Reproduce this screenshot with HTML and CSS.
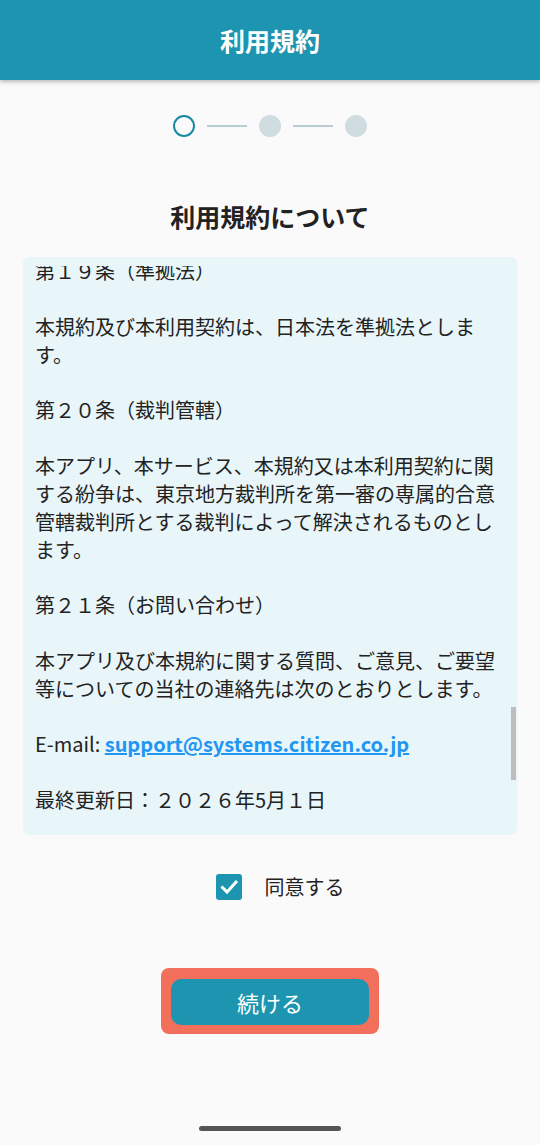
FILE: index.html
```html
<!DOCTYPE html>
<html lang="ja">
<head>
  <meta charset="UTF-8" />
  <meta name="viewport" content="width=device-width, initial-scale=1.0"/>
  <title>利用規約</title>
  <link rel="stylesheet" href="styles.css">
</head>
<body>

<header class="app-bar">
  <h1>利用規約</h1>
</header>

<div class="stepper">
  <span class="step current"></span>
  <span class="step-line"></span>
  <span class="step"></span>
  <span class="step-line"></span>
  <span class="step"></span>
</div>

<h2 class="page-title">利用規約について</h2>

<div class="terms-box">
  <div class="terms-scroll">
    <p>第１９条（準拠法）</p>
    <p>本規約及び本利用契約は、日本法を準拠法とします。</p>
    <p>第２０条（裁判管轄）</p>
    <p>本アプリ、本サービス、本規約又は本利用契約に関する紛争は、東京地方裁判所を第一審の専属的合意管轄裁判所とする裁判によって解決されるものとします。</p>
    <p>第２１条（お問い合わせ）</p>
    <p>本アプリ及び本規約に関する質問、ご意見、ご要望等についての当社の連絡先は次のとおりとします。</p>
    <p>E-mail: <a href="mailto:support@systems.citizen.co.jp">support@systems.citizen.co.jp</a></p>
    <p>最終更新日：２０２６年5月１日</p>
  </div>
  <div class="scroll-thumb"></div>
</div>

<label class="agree">
  <span class="checkbox">
    <svg viewBox="0 0 26 26" width="26" height="26">
      <path d="M5.5 12.5 L11 18 L21 7" fill="none" stroke="#fff" stroke-width="3"/>
    </svg>
  </span>
  <span>同意する</span>
</label>

<div class="btn-wrap">
  <button class="btn-next">続ける</button>
</div>

<div class="home-bar"></div>

</body>
</html>
```

FILE: styles.css
```css
* {
  box-sizing: border-box;
  font-family: "Noto Sans CJK JP", "Noto Sans", sans-serif;
}
body {
  margin: 0;
  background: #fafafa;
  color: #222;
  display: flex;
  flex-direction: column;
  align-items: center;
  min-height: 1145px;
}
.app-bar {
  width: 100%;
  height: 80px;
  background: #1e95b0;
  display: flex;
  align-items: center;
  justify-content: center;
  box-shadow: 0 2px 4px rgba(0,0,0,0.25);
}
.app-bar h1 {
  margin: 0;
  color: #fff;
  font-size: 25px;
  font-weight: 700;
}
.stepper {
  margin-top: 35px;
  display: flex;
  align-items: center;
  gap: 12px;
}
.step {
  width: 22px;
  height: 22px;
  border-radius: 50%;
  background: #cfdce0;
}
.step.current {
  background: transparent;
  border: 2px solid #1a8aa6;
}
.step-line {
  width: 40px;
  height: 2px;
  background: #b8ccd2;
}
.page-title {
  margin: 62px 0 0;
  font-size: 25px;
  line-height: 34px;
  font-weight: 700;
  color: #222;
}
.terms-box {
  position: relative;
  margin-top: 24px;
  width: 494px;
  height: 578px;
  background: #e8f5f9;
  border-radius: 6px;
  padding: 9px 12px 21px;
}
/* scrolled to the end: keep the last lines at the bottom */
.terms-scroll {
  height: 100%;
  overflow: hidden;
  display: flex;
  flex-direction: column;
  justify-content: flex-end;
}
.terms-scroll p {
  margin: 0 0 27.85px;
  font-size: 20px;
  line-height: 27.85px;
  color: #222;
}
.terms-scroll p:last-child {
  margin-bottom: 0;
}
.terms-scroll a {
  color: #2196f3;
  font-weight: 600;
  text-decoration: underline;
}
.scroll-thumb {
  position: absolute;
  right: 1px;
  top: 450px;
  width: 5px;
  height: 73px;
  background: #bdbdbd;
}
.agree {
  margin: 37px 0 0 20px;
  display: flex;
  align-items: center;
  gap: 23px;
  font-size: 20px;
  color: #222;
}
.checkbox {
  width: 26px;
  height: 26px;
  border-radius: 3px;
  background: #1e95b0;
  display: flex;
}
.btn-wrap {
  margin-top: 67px;
  padding: 11px 10px 9px;
  background: #f26f5c;
  border-radius: 8px;
}
.btn-next {
  display: block;
  width: 198px;
  height: 46px;
  border: none;
  border-radius: 10px;
  background: #1e95b0;
  color: #fff;
  font-size: 22px;
}
.home-bar {
  margin-top: 92px;
  width: 142px;
  height: 5px;
  border-radius: 3px;
  background: #555;
}
```
